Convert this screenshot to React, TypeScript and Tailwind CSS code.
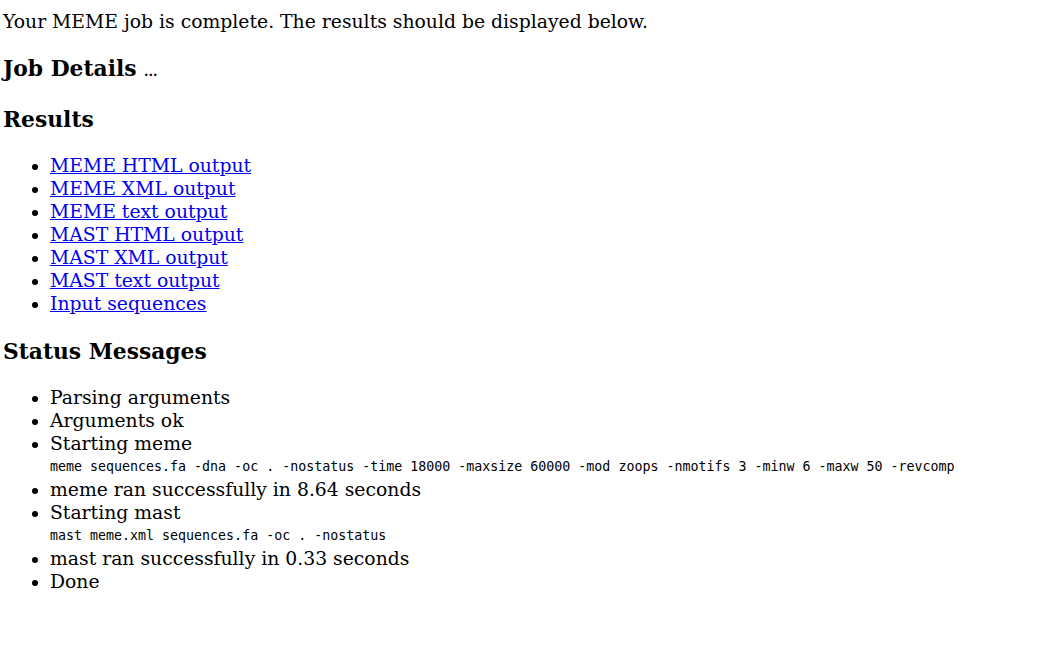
const results = [
  "MEME HTML output",
  "MEME XML output",
  "MEME text output",
  "MAST HTML output",
  "MAST XML output",
  "MAST text output",
  "Input sequences",
];

const status: { msg: string; cmd?: string }[] = [
  { msg: "Parsing arguments" },
  { msg: "Arguments ok" },
  {
    msg: "Starting meme",
    cmd: "meme sequences.fa -dna -oc . -nostatus -time 18000 -maxsize 60000 -mod zoops -nmotifs 3 -minw 6 -maxw 50 -revcomp",
  },
  { msg: "meme ran successfully in 8.64 seconds" },
  { msg: "Starting mast", cmd: "mast meme.xml sequences.fa -oc . -nostatus" },
  { msg: "mast ran successfully in 0.33 seconds" },
  { msg: "Done" },
];

export default function App() {
  return (
    <div className="min-h-screen bg-white pt-[10px] pl-[3px] font-['DejaVu_Serif',serif] text-[18.8px] text-black">
      <p className="leading-[23px]">
        Your MEME job is complete. The results should be displayed below.
      </p>

      <h3 className="mt-[22px] text-[21.8px] font-bold leading-[27px]">
        Job Details <span className="text-[13px] font-bold">...</span>
      </h3>

      <h3 className="mt-[21px] text-[21.8px] font-bold leading-[27px]">
        Results
      </h3>
      <ul className="mt-[21px] list-disc pl-[47px] leading-[23px]">
        {results.map((r) => (
          <li key={r}>
            <a href="#" className="text-[#0000ee] underline">
              {r}
            </a>
          </li>
        ))}
      </ul>

      <h3 className="mt-[23px] text-[21.8px] font-bold leading-[27px]">
        Status Messages
      </h3>
      <ul className="mt-[21px] list-disc pl-[47px] leading-[23px]">
        {status.map((s) => (
          <li key={s.msg}>
            {s.msg}
            {s.cmd && (
              <div className="pt-px font-['DejaVu_Sans_Mono',monospace] text-[13.3px] leading-[22px]">
                {s.cmd}
              </div>
            )}
          </li>
        ))}
      </ul>
    </div>
  );
}
